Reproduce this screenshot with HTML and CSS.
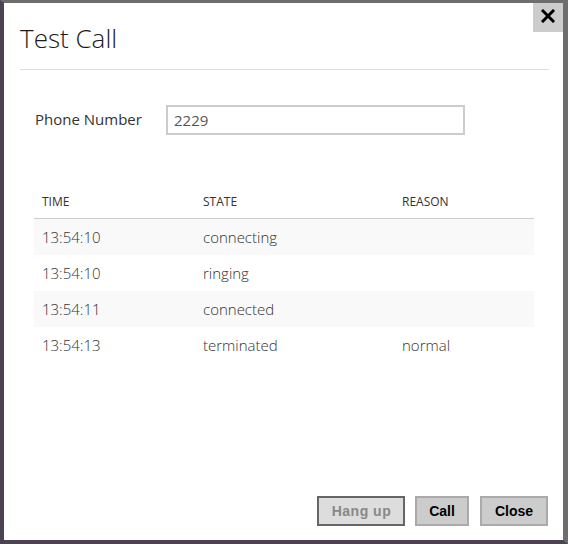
FILE: index.html
```html
<!DOCTYPE html>
<html lang="en">
<head>
  <meta charset="UTF-8" />
  <title>Test Call</title>
  <link rel="stylesheet" href="styles.css">
</head>
<body>
  <div class="dialog">
    <button class="close-x" title="Close">
      <svg width="14" height="14" viewBox="0 0 14 14"><path d="M2 2 L12 12 M12 2 L2 12" stroke="#000" stroke-width="3" stroke-linecap="square"/></svg>
    </button>
    <header>Test Call</header>

    <div class="field">
      <label for="numero">Phone Number</label>
      <input type="text" id="numero" value="2229" />
    </div>

    <table class="log">
      <thead>
        <tr><th class="col-time">TIME</th><th class="col-state">STATE</th><th>REASON</th></tr>
      </thead>
      <tbody>
        <tr><td>13:54:10</td><td>connecting</td><td></td></tr>
        <tr><td>13:54:10</td><td>ringing</td><td></td></tr>
        <tr><td>13:54:11</td><td>connected</td><td></td></tr>
        <tr><td>13:54:13</td><td>terminated</td><td>normal</td></tr>
      </tbody>
    </table>

    <div class="botones">
      <button class="boton boton-colgar">Hang up</button>
      <button class="boton">Call</button>
      <button class="boton boton-cerrar">Close</button>
    </div>
  </div>
</body>
</html>
```

FILE: styles.css
```css
body {
  margin: 0;
  height: 544px;
  background: #6d6d6d;
  font-family: 'Open Sans', 'Noto Sans', sans-serif;
  box-sizing: border-box;
  border-top: 3px solid #6d6d6d;
  border-left: 4px solid #4b4352;
  border-bottom: 4px solid #4b4352;
  border-right: 5px solid #6d6d6d;
}

.dialog {
  position: relative;
  background: #fff;
  height: 100%;
  padding: 0 14px 0 16px;
  display: flex;
  flex-direction: column;
}

.close-x {
  position: absolute;
  top: -3px;
  right: 0;
  width: 30px;
  height: 32px;
  background: #cccccc;
  border: none;
  padding: 0;
  display: flex;
  align-items: center;
  justify-content: center;
}

header {
  font-weight: 300;
  font-size: 26px;
  color: #1a1a1a;
  padding: 18px 0 13px 0;
  border-bottom: 1px solid #dddddd;
  line-height: 35px;
}

.field {
  display: flex;
  align-items: center;
  margin: 35px 0 0 15px;
}

.field label {
  width: 131px;
  font-size: 15px;
  color: #333;
  margin-top: -2px;
}

.field input {
  width: 299px;
  height: 30px;
  box-sizing: border-box;
  border: 2px solid #cccccc;
  padding: 0 6px;
  font-family: inherit;
  font-size: 15px;
  color: #555;
  outline: none;
}

.log {
  margin: 58px 0 0 14px;
  width: 500px;
  border-collapse: collapse;
}

.log th {
  text-align: left;
  font-weight: normal;
  font-size: 12px;
  color: #333;
  padding: 0 8px 8px 8px;
  border-bottom: 1px solid #cccccc;
}

.col-time { width: 145px; }
.col-state { width: 183px; }

.log td {
  height: 36px;
  padding: 0 8px;
  font-size: 15px;
  font-weight: 300;
  color: #333;
}

.log tbody tr:nth-child(odd) {
  background: #f9f9f9;
}

.botones {
  margin-top: auto;
  margin-bottom: 14px;
  display: flex;
  justify-content: flex-end;
  gap: 10px;
  padding-right: 1px;
}

.boton {
  font-family: 'Liberation Sans', Arial, sans-serif;
  font-weight: bold;
  font-size: 14px;
  height: 30px;
  padding: 0 12px;
  background: #cccccc;
  border: 2px solid #aaaaaa;
  color: #000;
}

.boton-colgar {
  background: #dddddd;
  border-color: #666666;
  color: #888;
  letter-spacing: 0.5px;
  padding: 0 12px 0 13px;
}

.boton-cerrar {
  margin-left: 1px;
  padding: 0 13px;
}
```
